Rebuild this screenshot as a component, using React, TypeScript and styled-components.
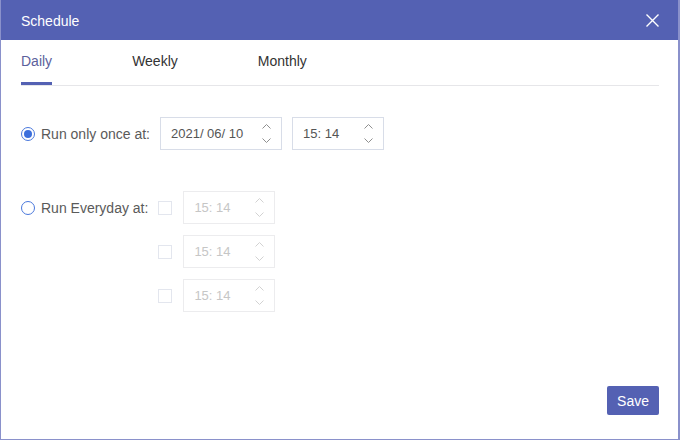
import React from "react";
import styled, { createGlobalStyle } from "styled-components";

const Global = createGlobalStyle`
  html, body { margin: 0; padding: 0; background: #fff; }
  body { font-family: "Liberation Sans", Arial, sans-serif; }
  * { box-sizing: border-box; }
`;

const Dialog = styled.div`
  width: 680px;
  height: 440px;
  display: flex;
  flex-direction: column;
  border: 1px solid #8a91cb;
  border-top: none;
  border-right-width: 2px;
  background: #fff;
`;

const Header = styled.div`
  height: 40px;
  flex: none;
  background: #5461b3;
  display: flex;
  align-items: center;
  justify-content: space-between;
  padding: 0 18px 0 20px;
  color: #fff;
  font-size: 14px;
`;

const Title = styled.span`
  line-height: 40px;
  padding-top: 1px;
`;

const CloseBtn = styled.button`
  width: 16px;
  height: 16px;
  padding: 0;
  border: none;
  background: transparent;
  display: flex;
  align-items: center;
  justify-content: center;
  cursor: pointer;
`;

const Body = styled.div`
  flex: 1;
  display: flex;
  flex-direction: column;
  padding: 0 19px 0 20px;
`;

const Tabs = styled.div`
  display: flex;
  gap: 80px;
  border-bottom: 1px solid #e6e6e9;
`;

const Tab = styled.div<{ $active?: boolean }>`
  font-size: 14px;
  line-height: 16px;
  padding-top: 13px;
  padding-bottom: 13px;
  color: ${(p) => (p.$active ? "#5c5f9c" : "#333")};
  border-bottom: 3px solid ${(p) => (p.$active ? "#5461b3" : "transparent")};
`;

const Options = styled.div`
  display: flex;
  flex-direction: column;
  gap: 41px;
  padding-top: 31px;
`;

const OptionRow = styled.div`
  display: flex;
  align-items: flex-start;
`;

const RadioLabel = styled.label`
  display: flex;
  align-items: center;
  height: 33px;
  gap: 6px;
  font-size: 14px;
  color: #5a5a5a;
  margin-right: 10px;
  cursor: pointer;
`;

const Radio = styled.span<{ $checked?: boolean }>`
  width: 14px;
  height: 14px;
  border-radius: 50%;
  border: 1px solid #4a78dc;
  display: flex;
  align-items: center;
  justify-content: center;
  flex: none;
  &::after {
    content: "";
    width: 8px;
    height: 8px;
    border-radius: 50%;
    background: ${(p) => (p.$checked ? "#3c6fdc" : "transparent")};
  }
`;

const Inputs = styled.div`
  display: flex;
  gap: 10px;
`;

const SlotList = styled.div`
  display: flex;
  flex-direction: column;
  gap: 11px;
`;

const Slot = styled.div`
  display: flex;
  align-items: center;
  gap: 11px;
`;

const Check = styled.span`
  width: 14px;
  height: 14px;
  border: 1px solid #e3e6ee;
  background: #fff;
  flex: none;
`;

const Spin = styled.div<{ $w: number; $disabled?: boolean }>`
  width: ${(p) => p.$w}px;
  height: 33px;
  border: 1px solid ${(p) => (p.$disabled ? "#ececee" : "#d8dde8")};
  display: flex;
  align-items: center;
  justify-content: space-between;
  padding: 0 10px 0 10px;
  font-size: 13px;
  color: ${(p) => (p.$disabled ? "#c6c6c6" : "#555")};
  white-space: pre;
`;

const Arrows = styled.div<{ $disabled?: boolean }>`
  display: flex;
  flex-direction: column;
  gap: 9px;
  color: ${(p) => (p.$disabled ? "#d2d2d2" : "#8f8f8f")};
`;

const Footer = styled.div`
  display: flex;
  justify-content: flex-end;
  padding: 0 19px 24px 0;
`;

const SaveBtn = styled.button`
  height: 29px;
  padding: 0 10px;
  border: none;
  border-radius: 2px;
  background: #5461b3;
  color: #fff;
  font-family: "Liberation Sans", Arial, sans-serif;
  font-size: 14px;
  cursor: pointer;
`;

const Chevron = ({ up }: { up?: boolean }) => (
  <svg width="9" height="5" viewBox="0 0 9 5" style={{ display: "block" }}>
    <path
      d={up ? "M0.5 4.5 L4.5 0.5 L8.5 4.5" : "M0.5 0.5 L4.5 4.5 L8.5 0.5"}
      fill="none"
      stroke="currentColor"
      strokeWidth="1"
    />
  </svg>
);

const SpinBox = ({ value, w, disabled }: { value: string; w: number; disabled?: boolean }) => (
  <Spin $w={w} $disabled={disabled}>
    <span>{value}</span>
    <Arrows $disabled={disabled}>
      <Chevron up />
      <Chevron />
    </Arrows>
  </Spin>
);

export default function App() {
  return (
    <>
      <Global />
      <Dialog>
        <Header>
          <Title>Schedule</Title>
          <CloseBtn aria-label="close">
            <svg width="13" height="13" viewBox="0 0 13 13">
              <path d="M0.5 0.5 L12.5 12.5 M12.5 0.5 L0.5 12.5" stroke="#fff" strokeWidth="1.4" />
            </svg>
          </CloseBtn>
        </Header>
        <Body>
          <Tabs>
            <Tab $active>Daily</Tab>
            <Tab>Weekly</Tab>
            <Tab>Monthly</Tab>
          </Tabs>
          <Options>
            <OptionRow>
              <RadioLabel>
                <Radio $checked />
                Run only once at:
              </RadioLabel>
              <Inputs>
                <SpinBox value="2021/ 06/ 10" w={122} />
                <SpinBox value="15: 14" w={92} />
              </Inputs>
            </OptionRow>
            <OptionRow>
              <RadioLabel>
                <Radio />
                Run Everyday at:
              </RadioLabel>
              <SlotList>
                {[0, 1, 2].map((i) => (
                  <Slot key={i}>
                    <Check />
                    <SpinBox value="15: 14" w={92} disabled />
                  </Slot>
                ))}
              </SlotList>
            </OptionRow>
          </Options>
        </Body>
        <Footer>
          <SaveBtn>Save</SaveBtn>
        </Footer>
      </Dialog>
    </>
  );
}
